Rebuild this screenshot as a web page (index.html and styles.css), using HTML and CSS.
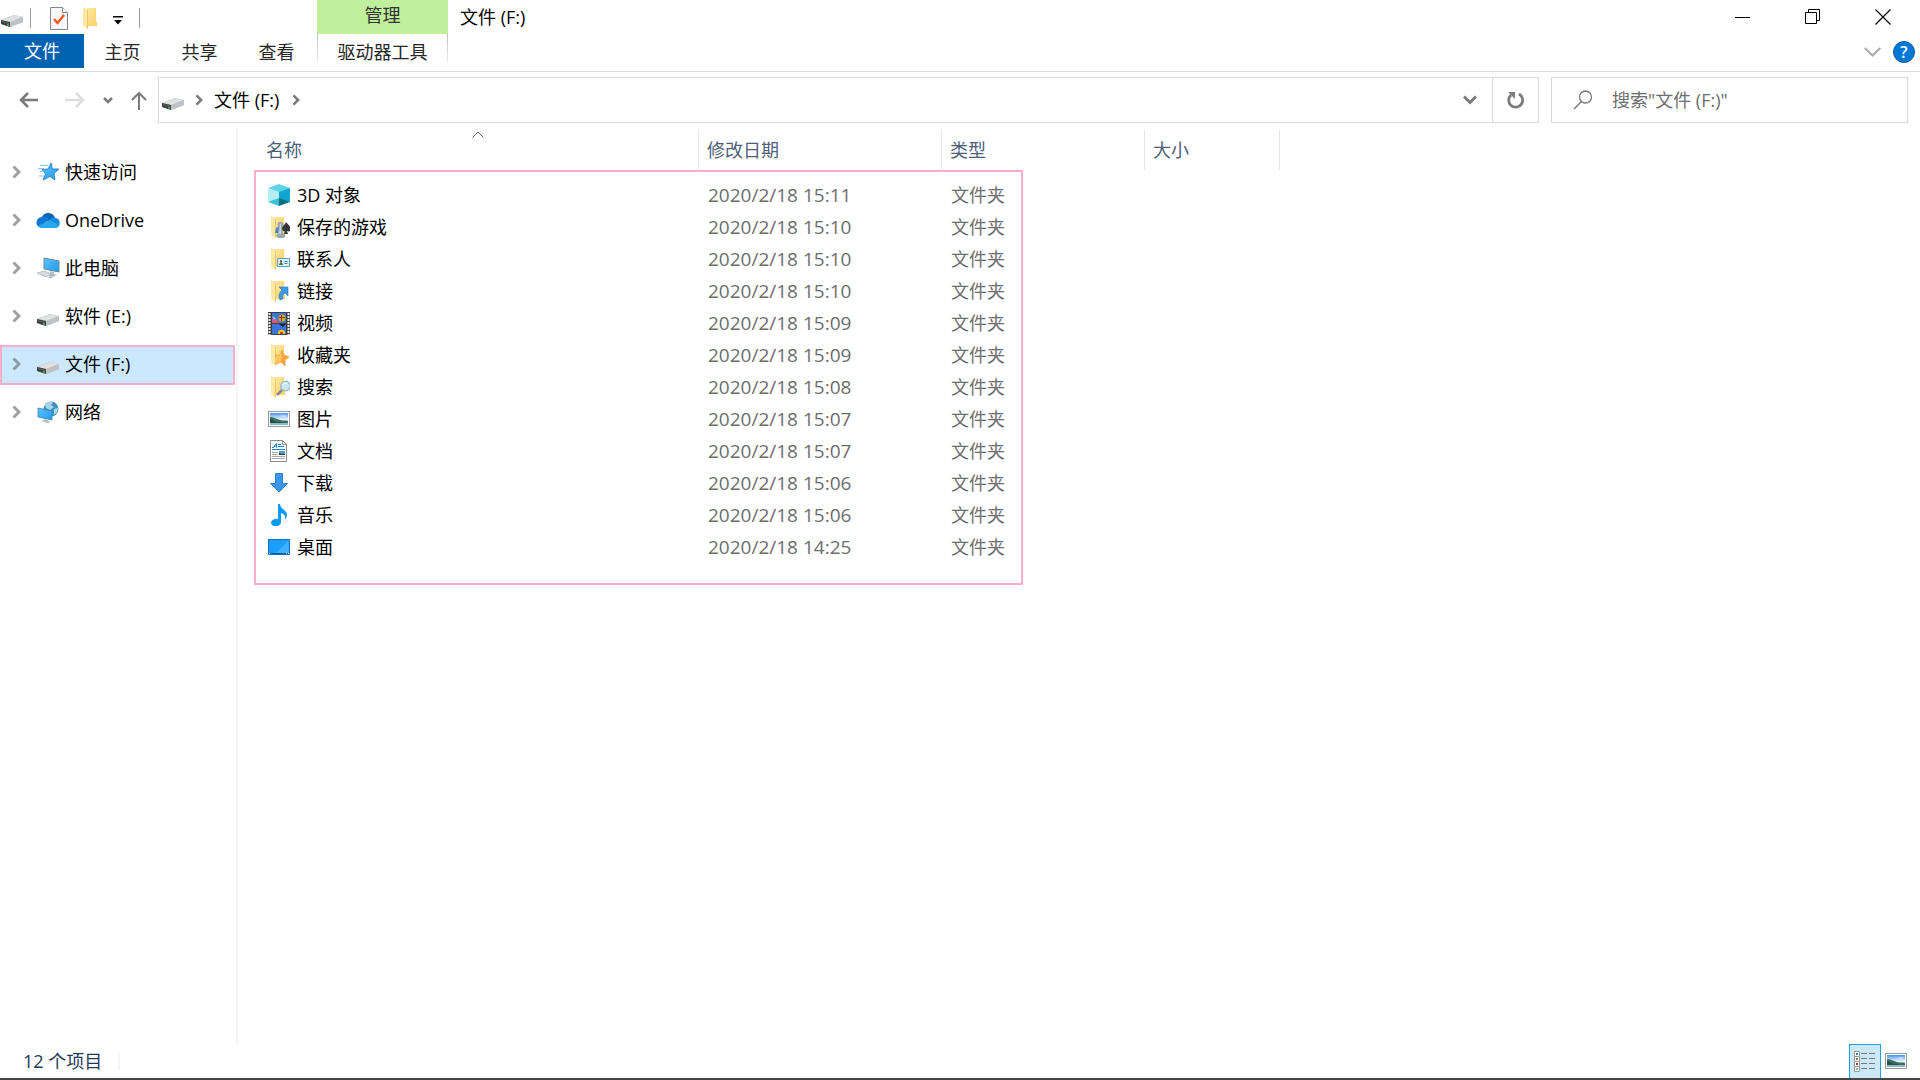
FILE: index.html
```html
<!DOCTYPE html>
<html lang="zh-CN">
<head>
	<meta charset="UTF-8">
	<title>文件 (F:)</title>
	<link rel="stylesheet" href="styles.css">
</head>
<body>
	<!-- 公用图标 -->
	<svg class="defs" width="0" height="0">
		<defs>
			<linearGradient id="gDrive" x1="0" y1="0" x2="1" y2="1"><stop offset="0" stop-color="#d2d3d5"/><stop offset="1" stop-color="#eceded"/></linearGradient>
			<linearGradient id="gFolder" x1="0" y1="0" x2="1" y2="1"><stop offset="0" stop-color="#ffe9a6"/><stop offset="1" stop-color="#f8cf63"/></linearGradient>
			<linearGradient id="gBlue" x1="0" y1="0" x2="1" y2="1"><stop offset="0" stop-color="#5ec3fb"/><stop offset="1" stop-color="#1f9bef"/></linearGradient>
			<linearGradient id="gSky" x1="0" y1="0" x2="0" y2="1"><stop offset="0" stop-color="#4a90f0"/><stop offset=".5" stop-color="#dff1fd"/></linearGradient>
		</defs>
		<symbol id="drive" viewBox="0 0 22 12">
			<path d="M0 5 13 0 22 2v5l-13 5-9-3z" fill="#b5b7b9"/>
			<path d="M0 5 13 0 22 2 9 7z" fill="url(#gDrive)"/>
			<path d="M9 7 22 2v5L9 12z" fill="#bfc1c4"/>
			<path d="M0 5l9 2v5L0 9z" fill="#3c3f40"/>
			<path d="M1 6l7 2v1L1 7z" fill="#646868"/>
			<path d="M6 9l2 .5v1.3l-2-.5z" fill="#2fe04a"/>
		</symbol>
		<symbol id="folder" viewBox="0 0 22 22">
			<path d="M6 1h10v14h1v4H6z" fill="#f8d778"/>
			<path d="M6 1h9v14h2v4H6z" fill="url(#gFolder)"/>
			<path d="M3 0l5 3v19l-5-3z" fill="#ffe8a3"/>
			<path d="M7 3l1 .5V22l-1-.5z" fill="#edc763"/>
		</symbol>
		<symbol id="photo" viewBox="0 0 22 16">
			<path d="M0 0h22v16H0z" fill="#999"/>
			<path d="M1 1h20v14H1z" fill="#fff"/>
			<path d="M2 2h18v12H2z" fill="url(#gSky)"/>
			<path d="M2 6c4 0 6 2 10 3 3 1 6 0 8 1v2H2z" fill="#3d7057"/>
			<path d="M2 8l7 3h6l-4 1H2z" fill="#254f49"/>
			<path d="M2 12h18v2H2z" fill="#89b8cb"/>
			<path d="M12 5c2-1 5-1 7 0l-3 1z" fill="#fff" opacity=".6"/>
		</symbol>
		<symbol id="arrow-r" viewBox="0 0 9 14">
			<path d="M1.500 1.500 7 7l-5.500 5.500" fill="none" stroke="currentColor" stroke-width="3"/>
		</symbol>
	</svg>

	<header>
		<div class="title">
			<div class="quick">
				<svg class="ico-drive" width="22" height="12"><use href="#drive"/></svg>
				<i class="sep"></i>
				<button class="q-check" aria-label="属性">
					<svg width="18" height="23" viewBox="0 0 18 23"><path d="M.5.5h12l5 5v17H.5z" fill="#f7f7f8" stroke="#848689"/><path d="M12.500.5v5h5" fill="#fff" stroke="#848689"/><path d="M4 12l3.500 4L14 8" fill="none" stroke="#f0561d" stroke-width="2.400"/></svg>
				</button>
				<button class="q-folder" aria-label="新建文件夹"><svg width="22" height="22"><use href="#folder"/></svg></button>
				<button class="q-more" aria-label="自定义快速访问工具栏">
					<svg width="10" height="9" viewBox="0 0 10 9"><path d="M0 0h10v1.500H0zM1 4h8L5 8.500z"/></svg>
				</button>
				<i class="sep"></i>
			</div>
			<div class="manage">管理</div>
			<h1>文件 (F:)</h1>
			<div class="winbtn">
				<button aria-label="最小化"><svg width="16" height="16" viewBox="0 0 16 16"><path d="M0 8.500h15" stroke="#000"/></svg></button>
				<button aria-label="还原"><svg width="16" height="16" viewBox="0 0 16 16"><path d="M.5 3.500h11v11H.5zM3.500 3V.5h11v11H12" fill="none" stroke="#000"/></svg></button>
				<button aria-label="关闭"><svg width="16" height="16" viewBox="0 0 16 16"><path d="M.5.5l15 15M15.500.5l-15 15" stroke="#000" stroke-width="1.200"/></svg></button>
			</div>
		</div>
		<div class="tabs">
			<button class="active">文件</button>
			<button>主页</button>
			<button>共享</button>
			<button>查看</button>
			<button class="tool">驱动器工具</button>
			<div class="help">
				<button aria-label="展开功能区"><svg width="17" height="10" viewBox="0 0 17 10"><path d="M.7 1l7.800 7.500L16.300 1" fill="none" stroke="#a9a9a9" stroke-width="2"/></svg></button>
				<button class="q" aria-label="帮助">?</button>
			</div>
		</div>
	</header>

	<nav class="bar">
		<div class="go">
			<button aria-label="后退"><svg width="20" height="16" viewBox="0 0 20 16"><path d="M19 8H2M9 1L2 8l7 7" fill="none" stroke="#7b7b7b" stroke-width="2.600"/></svg></button>
			<button aria-label="前进" disabled><svg width="20" height="16" viewBox="0 0 20 16"><path d="M0 8h18M11 1l7 7-7 7" fill="none" stroke="#dedede" stroke-width="2.600"/></svg></button>
			<button class="recent" aria-label="最近浏览的位置"><svg width="10" height="7" viewBox="0 0 10 7"><path d="M1 1l4 4 4-4" fill="none" stroke="#7b7b7b" stroke-width="2.600"/></svg></button>
			<button aria-label="上移"><svg width="16" height="19" viewBox="0 0 16 19"><path d="M8 19V2M1 9l7-7 7 7" fill="none" stroke="#7b7b7b" stroke-width="2"/></svg></button>
		</div>
		<div class="address">
			<svg class="ico-drive" width="22" height="12"><use href="#drive"/></svg>
			<svg class="chev" width="8" height="12"><use href="#arrow-r"/></svg>
			<button class="path">文件 (F:)</button>
			<svg class="chev" width="8" height="12"><use href="#arrow-r"/></svg>
			<button class="drop" aria-label="以前的位置"><svg width="14" height="10" viewBox="0 0 14 10"><path d="M1 1.500l6 6 6-6" fill="none" stroke="#7b7b7b" stroke-width="3"/></svg></button>
			<button class="refresh" aria-label="刷新"><svg width="18" height="18" viewBox="0 0 18 18"><path d="M12 3a7 7 0 1 1-8 1" fill="none" stroke="#7b7b7b" stroke-width="2.800"/><path d="M1 1h7v7z" fill="#7b7b7b"/></svg></button>
		</div>
		<label class="search">
			<svg width="20" height="20" viewBox="0 0 20 20"><circle cx="12.500" cy="7" r="6" fill="none" stroke="#777" stroke-width="1.300"/><path d="M8.500 11.500L1 19" stroke="#777" stroke-width="1.500"/></svg>
			<input type="text" aria-label="搜索" placeholder='搜索"文件 (F:)"'>
		</label>
	</nav>

	<main>
		<ul id="side">
			<li>
				<svg class="chev" width="9" height="14"><use href="#arrow-r"/></svg>
				<svg width="24" height="20" viewBox="0 0 24 20"><path d="M15 1l1.500 6H23l-5 4.500 1 6.500-5-3.500L7 18l2.500-6L6 7.500l6-.5z" fill="url(#gBlue)" stroke="#1879c6" stroke-width=".8"/><path d="M4 3.500h8M2 6.500h6M4 9.500h4M3 14h5" stroke="#8fc4ea"/></svg>
				<a href="#">快速访问</a>
			</li>
			<li>
				<svg class="chev" width="9" height="14"><use href="#arrow-r"/></svg>
				<svg width="24" height="16" viewBox="0 0 24 16"><path d="M6 5a7 7 0 0 1 13 1l-5 5z" fill="#0864b8"/><path d="M5.500 5c3-1 5 0 8 2l-9 8C-1 15-1 6 5.500 5z" fill="#0f78d4"/><path d="M13 8c3-3 6-3 7-2 5 1 5 9 0 10h-7z" fill="#1490df"/><path d="M2 14l12-6 9 5.500c-1 1.500-2 2.500-4 2.500H6c-2 0-3-.5-4-2z" fill="#28a8ea"/></svg>
				<a href="#">OneDrive</a>
			</li>
			<li>
				<svg class="chev" width="9" height="14"><use href="#arrow-r"/></svg>
				<svg width="24" height="22" viewBox="0 0 24 22"><path d="M8 1l15 3v11L8 12z" fill="url(#gBlue)" stroke="#6e8798"/><path d="M14 14l4 1v2l3 1-4 2-6-2 3-1z" fill="#b7c1c8"/><path d="M1 16l7-2 8 3-6 3z" fill="#d4dade" stroke="#a3adb4" stroke-width=".6"/><path d="M12 20l3-1 2 1-3 1.500z" fill="#aab5bc"/></svg>
				<a href="#">此电脑</a>
			</li>
			<li>
				<svg class="chev" width="9" height="14"><use href="#arrow-r"/></svg>
				<svg class="ico-drive" width="24" height="12"><use href="#drive"/></svg>
				<a href="#">软件 (E:)</a>
			</li>
			<li class="active">
				<svg class="chev" width="9" height="14"><use href="#arrow-r"/></svg>
				<svg class="ico-drive" width="24" height="12"><use href="#drive"/></svg>
				<a href="#">文件 (F:)</a>
			</li>
			<li>
				<svg class="chev" width="9" height="14"><use href="#arrow-r"/></svg>
				<svg width="24" height="22" viewBox="0 0 24 22"><circle cx="15" cy="8" r="7.500" fill="#3d92bd"/><path d="M9 4c2-3 5-4 8-3l-2 3 3 2-4 3-4-2zM18 8l4-1c0 4-2 6-4 7z" fill="#a9d6e6"/><path d="M2 7l14 3v9L2 16z" fill="url(#gBlue)" stroke="#3f83ad" stroke-width=".8"/><path d="M8 18l4 1v1l3 1-4 1-6-2 3-1z" fill="#b7c1c8"/></svg>
				<a href="#">网络</a>
			</li>
		</ul>

		<div id="content">
			<table id="list">
				<colgroup><col class="c-name"><col class="c-date"><col class="c-type"><col class="c-size"></colgroup>
				<thead>
					<tr>
						<th>名称<svg class="sort" width="12" height="7" viewBox="0 0 12 7"><path d="M.5 6.500L6 1l5.500 5.500" fill="none" stroke="#666"/></svg></th>
						<th>修改日期</th>
						<th>类型</th>
						<th>大小</th>
					</tr>
				</thead>
				<tbody>
					<tr>
						<td><svg width="22" height="22" viewBox="0 0 22 22"><path d="M11 0l11 4-11 5L0 4z" fill="#5fd3e8"/><path d="M0 4l11 4v9L0 18z" fill="#b4edf2"/><path d="M22 4L11 8v9l11 1z" fill="#12a5cf"/><path d="M0 18l11-4v8z" fill="#39c3d8"/><path d="M22 18l-11-4v8z" fill="#076f84"/></svg>3D 对象</td>
						<td>2020/2/18 15:11</td><td>文件夹</td><td></td>
					</tr>
					<tr>
						<td><svg width="22" height="22" viewBox="0 0 22 22"><use href="#folder"/><path d="M7 17l1-5 5-3 2 3-5 5z" fill="#4c87c1"/><path d="M18 6c1 2 5 4 5 7 0 2-2 3-4 2l1 3h-4l1-3c-2 1-4-1-3-3 0-2 3-3 4-6z" fill="#34383b"/><path d="M11 6c3-1 5 1 4 4l-1 1 1 6 2 2v2l-2 1h-5l-2-2 2-3 1-6c-2-2-2-4 0-5z" fill="#98a6b0"/><path d="M12 7l1 1v10h-2z" fill="#ccd6dc"/></svg>保存的游戏</td>
						<td>2020/2/18 15:10</td><td>文件夹</td><td></td>
					</tr>
					<tr>
						<td><svg width="22" height="22" viewBox="0 0 22 22"><use href="#folder"/><path d="M9.500 10.500h12v8h-12z" fill="#d6effb" stroke="#5b9ec6"/><path d="M11 12h4v5h-4z" fill="#fff"/><circle cx="13" cy="13.500" r="1.300" fill="#62503d"/><path d="M11 17c0-3 4-3 4 0z" fill="#347a52"/><path d="M16.500 13.500h3M16.500 15.500h3" stroke="#3a86b5"/></svg>联系人</td>
						<td>2020/2/18 15:10</td><td>文件夹</td><td></td>
					</tr>
					<tr>
						<td><svg width="22" height="22" viewBox="0 0 22 22"><use href="#folder"/><path d="M11 7h9v9l-3-3c-2 1-3 3-2 6l-3 1c-2-4-1-7 2-10z" fill="#3f98e6" stroke="#2678c8" stroke-width=".6"/></svg>链接</td>
						<td>2020/2/18 15:10</td><td>文件夹</td><td></td>
					</tr>
					<tr>
						<td><svg width="22" height="23" viewBox="0 0 22 23"><path d="M0 0h22v23H0z" fill="#3f4042"/><path d="M1.500 1v22M20.500 1v22" stroke="#eee" stroke-width="2" stroke-dasharray="2 1"/><path d="M4 1h14v10H4zM4 12h14v10H4z" fill="#3875d7"/><circle cx="14" cy="6" r="3.500" fill="#d9ac20"/><path d="M11 5h6v1h-6zM13 3h1v6h-1z" fill="#8a3719"/><path d="M4 7l3-1 3 3 2 2H4z" fill="#d45a7d"/><path d="M4 4l4 2-2 2z" fill="#8fc0eb"/><path d="M11 12h7l-3 3z" fill="#202020"/><path d="M10 20c1-3 6-3 7 0v2h-7z" fill="#f0c321"/><path d="M12 20h3v2h-3z" fill="#d23929"/></svg>视频</td>
						<td>2020/2/18 15:09</td><td>文件夹</td><td></td>
					</tr>
					<tr>
						<td><svg width="22" height="22" viewBox="0 0 22 22"><use href="#folder"/><path d="M14 6l2 5 5 2-4 3v6l-4-4-5 2 2-5-3-4h5z" fill="#ffc966" stroke="#f0a040" stroke-width=".8"/><path d="M14 6l2 5 5 2-4 3v6l-4-5z" fill="#f58a2c" opacity=".6"/></svg>收藏夹</td>
						<td>2020/2/18 15:09</td><td>文件夹</td><td></td>
					</tr>
					<tr>
						<td><svg width="22" height="22" viewBox="0 0 22 22"><use href="#folder"/><path d="M14 14l-5 5" stroke="#8a8d8f" stroke-width="2.500"/><circle cx="17.500" cy="10" r="4.800" fill="#c8e6f8" stroke="#95b4c6" stroke-width="1.200"/><path d="M14.500 9c1-2 3-2 5-1" stroke="#fff" fill="none"/></svg>搜索</td>
						<td>2020/2/18 15:08</td><td>文件夹</td><td></td>
					</tr>
					<tr>
						<td><svg width="22" height="16"><use href="#photo"/></svg>图片</td>
						<td>2020/2/18 15:07</td><td>文件夹</td><td></td>
					</tr>
					<tr>
						<td><svg width="22" height="22" viewBox="0 0 22 22"><path d="M2.500.5h12l4 4v17h-16z" fill="#fff" stroke="#8c8c8c"/><path d="M14.500.5v4h4" fill="none" stroke="#8c8c8c"/><path d="M4 7.500h1.500l3-4v4M6 6h3M10 4.500h3M10 6.500h6" fill="none" stroke="#1683c9"/><path d="M4 9.500h13" stroke="#1683c9"/><path d="M4 12.500h6M4 14.500h6M4 16.500h13M4 18.500h13" stroke="#a8a8a8"/><path d="M11 11h6v4h-6z" fill="#5b94c4"/><path d="M11 13l3 1h3v1h-6z" fill="#24463f"/></svg>文档</td>
						<td>2020/2/18 15:07</td><td>文件夹</td><td></td>
					</tr>
					<tr>
						<td><svg width="22" height="20" viewBox="0 0 22 20"><path d="M7.500.5h7v10h5L11 19l-8.500-8.500h5z" fill="#3a96e8" stroke="#2a7fce"/></svg>下载</td>
						<td>2020/2/18 15:06</td><td>文件夹</td><td></td>
					</tr>
					<tr>
						<td><svg width="22" height="22" viewBox="0 0 22 22"><path d="M10 0h2c0 5 7 6 7 11 0 2-1 4-2 5 1-4-1-6-4-7v9c0 5-9 6-10 1 0-3 4-5 7-4z" fill="#0c9bf0"/></svg>音乐</td>
						<td>2020/2/18 15:06</td><td>文件夹</td><td></td>
					</tr>
					<tr>
						<td><svg width="22" height="16" viewBox="0 0 22 16"><path d="M.5.5h21v15H.5z" fill="#1a9fff" stroke="#0b6fb8"/><path d="M21 1v13H8z" fill="#3db0ff"/><path d="M1 14.500h20" stroke="#095c9c"/><path d="M1 14h1v1H1zM18 14h1v1h-1zM20 14h1v1h-1z" fill="#fff"/></svg>桌面</td>
						<td>2020/2/18 14:25</td><td>文件夹</td><td></td>
					</tr>
				</tbody>
			</table>
			<div class="frame"></div>
		</div>
	</main>

	<footer>
		<span class="count">12 个项目</span>
		<button class="view active" aria-label="详细信息">
			<svg width="22" height="22" viewBox="0 0 22 22"><path d="M.5.5h5v5h-5zM.5 5.500h5v5h-5zM.5 10.500h5v5h-5zM.5 15.500h5v5h-5z" fill="#fff" stroke="#999"/><path d="M2 2h2v2H2z" fill="#2f7fa8"/><path d="M2 7h2v2H2z" fill="#6d8f3a"/><path d="M2 12h2v2H2z" fill="#b3342a"/><path d="M2 17h2v2H2z" fill="#7fb5a8"/><path d="M7 2.500h6M15 2.500h6M7 7.500h6M15 7.500h6M7 12.500h6M15 12.500h6M7 17.500h6M15 17.500h6" stroke="#707a80"/></svg>
		</button>
		<button class="view" aria-label="大缩略图"><svg width="22" height="16"><use href="#photo"/></svg></button>
	</footer>
</body>
</html>
```

FILE: styles.css
```css
*{box-sizing: border-box;}
body{margin: 0; height: 100vh; display: flex; flex-direction: column; background: #fff; font: 18px/24px "Open Sans", "Noto Sans CJK SC", sans-serif; color: #000; overflow: hidden;}
ul{margin: 0; padding: 0; list-style: none;}
a{color: inherit; text-decoration: none;}
button{margin: 0; padding: 0; border: none; background: none; font: inherit; color: inherit; display: flex; align-items: center; justify-content: center;}
svg{display: block; flex: none;}
.defs{position: absolute;}

/* 标题栏 */
header{border-bottom: 1px solid #dadbdc; height: 72px; flex: none;}
.title{display: flex; height: 34px;}
.quick{width: 317px; display: flex; align-items: center; padding-top: 2px;}
.quick .ico-drive{margin: 6px 7px 0 1px;}
.sep{width: 1px; height: 20px; background: #999;}
.q-check{margin-left: 19px;}
.q-folder{margin-left: 12px;}
.q-more{margin: 4px 16px 0 11px;}
.manage{width: 131px; background: #c0f09b; color: #333; text-align: center; line-height: 30px;}
h1{margin: 0 auto 0 12px; font-size: 18px; font-weight: 400; line-height: 34px;}
.winbtn{display: flex; padding-right: 2px;}
.winbtn button{width: 70px; height: 34px;}

.tabs{display: flex; height: 34px; color: #262626;}
.tabs button{width: 77px; align-items: flex-start; line-height: 36px;}
.tabs .active{width: 84px; background: #0063b1; color: #fff; line-height: 34px;}
.tabs .tool{width: 131px; margin-left: 2px; height: 28px; border: solid #ccc; border-width: 0 1px; border-image: linear-gradient(#bbb, #eee) 1;}
.tabs .help{display: flex; align-items: center; margin-left: auto; padding: 2px 5px 0 0; gap: 12px;}
.tabs .help button{width: auto;}
.tabs .help .q{width: 22px; height: 22px; border: 1px solid #005a9e; border-radius: 50%; background: #0078d7; color: #fff; font-size: 16px; line-height: 20px; font-weight: 600;}

/* 地址栏 */
.bar{display: flex; flex: none; height: 56px; padding: 5px 12px 5px 0;}
.bar .go{width: 158px; display: flex; align-items: center; padding-left: 19px;}
.go button{width: 20px; margin-right: 26px;}
.go .recent{width: 10px; margin: 0 18px 0 -8px;}
.go button:last-child{width: 16px; margin: 0;}
.address{flex: 1; display: flex; align-items: center; border: 1px solid #d9d9d9; padding-left: 3px; color: #7b7b7b;}
.address .ico-drive{margin: 8px 11px 0 0;}
.address .path{margin: 0 13px 0 11px; color: #000;}
.address .drop{margin-left: auto; width: 44px; height: 100%;}
.address .refresh{width: 46px; height: 100%; border-left: 1px solid #d9d9d9;}
.search{width: 357px; margin-left: 12px; display: flex; align-items: center; gap: 19px; border: 1px solid #d9d9d9; padding: 0 21px;}
.search input{flex: 1; min-width: 0; border: none; outline: none; padding: 0; font: inherit; background: none;}
.search input::placeholder{color: #6d6d6d; opacity: 1;}

main{flex: 1; min-height: 0; display: flex;}
/* 左侧导航 */
#side{width: 238px; border-right: 2px solid #f5f5f5; padding-top: 25px;}
#side li{display: flex; align-items: center; width: 235px; height: 40px; margin-bottom: 8px; border: 2px solid transparent; padding: 0 0 2px 10px;}
#side .chev{color: #a0a0a0; margin-right: 15px;}
#side .ico-drive{margin-top: 8px;}
#side a{margin-left: 5px;}
#side .active{background: #cce8ff; border-color: #ffaec9;}
#side .active .chev{color: #8c9ba8;}

/* 文件列表 */
#content{flex: 1; position: relative; padding: 2px 0 0 20px;}
#list{border-collapse: separate; border-spacing: 0; table-layout: fixed; width: 1022px;}
.c-name{width: 441px;}
.c-date{width: 243px;}
.c-type{width: 203px;}
.c-size{width: 135px;}
#list th{position: relative; height: 40px; padding: 0 8px; border-right: 1px solid #e5e5e5; text-align: left; font-weight: 400; color: #4c607a;}
#list .sort{position: absolute; left: calc(50% - 6px); top: 1px;}
#list tbody::before{content: ""; display: block; height: 9px;}
#list td{height: 32px; padding: 0 9px; color: #6d6d6d;}
#list td:first-child{display: flex; align-items: center; gap: 7px; padding-left: 10px; color: #000;}
#list td:nth-child(2){font-size: 19px;}
.frame{position: absolute; left: 16px; top: 42px; width: 769px; height: 415px; border: 2px solid #ffaec9; pointer-events: none;}

/* 状态栏 */
footer{flex: none; display: flex; align-items: center; height: 36px; border-bottom: 2px solid #444; padding-right: 9px; color: #1e395b;}
.count{margin-left: 23px; margin-right: auto; padding-right: 16px; line-height: 18px; border-right: 2px solid #f5f5f5;}
.view{width: 30px; height: 34px;}
.view.active{width: 32px; border: 1px solid #26a0da; border-bottom: none; background: #cce8f6;}
```
